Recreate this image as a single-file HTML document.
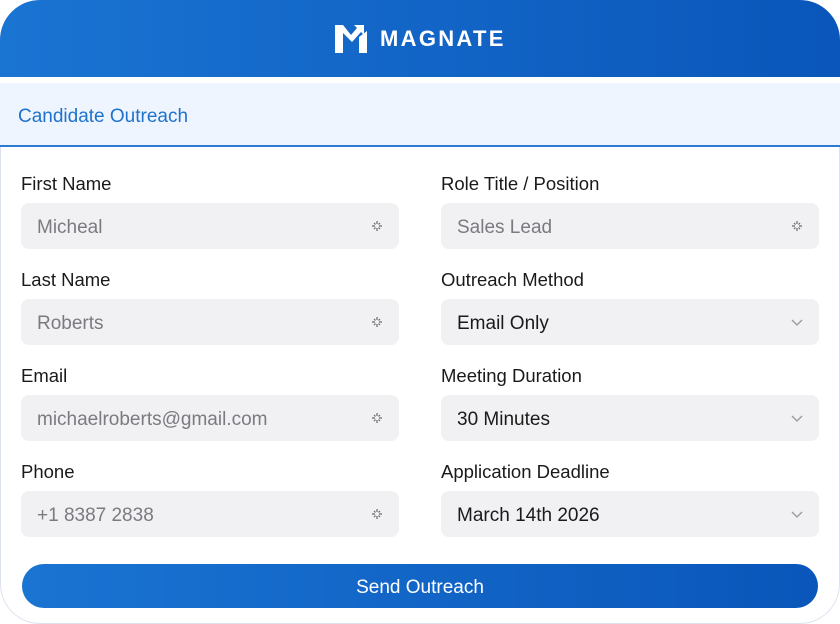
<!DOCTYPE html>
<html><head><style>
*{margin:0;padding:0;box-sizing:border-box}
body{width:840px;height:624px;background:#fff;font-family:"Liberation Sans",sans-serif;overflow:hidden}
.card{position:absolute;left:0;top:0;width:840px;height:624px;border-radius:40px;overflow:hidden;background:#fff;box-shadow:inset 0 0 0 1px #dde3ee}
.hdr{position:absolute;left:0;top:0;width:840px;height:77px;background:linear-gradient(90deg,#1a74d2,#0a56ba)}
.logo{position:absolute;left:335px;top:25px;display:flex;align-items:center}
.logo span{color:#fff;font-weight:bold;font-size:22px;letter-spacing:2.3px;margin-left:13px}
.sub{position:absolute;left:0;top:77px;width:840px;height:70px;background:#eef5ff;border-top:6px solid #fff;border-bottom:2px solid #2a7ad6}
.sub div{position:absolute;left:18px;top:23px;color:#1f72cc;font-size:19px}
.lbl{position:absolute;font-size:18.5px;color:#1a1a1a}
.inp{position:absolute;width:378px;height:46px;background:#f1f1f3;border-radius:8px;font-size:19px;color:#7a7a80;padding:14px 16px 0}
.inp.v{color:#1a1a1a}
.ic{position:absolute;right:16px;top:17px;width:12px;height:12px}
.btn{position:absolute;left:22px;top:564px;width:796px;height:44px;border-radius:22px;background:linear-gradient(90deg,#1a74d2,#0a56ba);color:#fff;font-size:19px;text-align:center;line-height:47px}
</style></head><body>
<div class="card">
<div class="hdr"><div class="logo">
<svg width="32" height="28" viewBox="0 0 32 28"><path d="M0 0h8l8 10 6-7-3-3h10v10l-3-3-9 10-9-9v20H0z" fill="#fff"/><path d="M24 12l8-6v22h-8z" fill="#fff"/></svg>
<span>MAGNATE</span></div></div>
<div class="sub"><div>Candidate Outreach</div></div>

<div class="lbl" style="left:21px;top:173px">First Name</div>
<div class="inp" style="left:21px;top:203px">Micheal<svg class="ic" viewBox="0 0 12 12"><path d="M6 1v3M6 8v3M1 6h3M8 6h3M3 3l1.5 1.5M7.5 7.5L9 9M9 3L7.5 4.5M4.5 7.5L3 9" stroke="#666" stroke-width="1.2"/></svg></div>
<div class="lbl" style="left:21px;top:269px">Last Name</div>
<div class="inp" style="left:21px;top:299px">Roberts<svg class="ic" viewBox="0 0 12 12"><path d="M6 1v3M6 8v3M1 6h3M8 6h3M3 3l1.5 1.5M7.5 7.5L9 9M9 3L7.5 4.5M4.5 7.5L3 9" stroke="#666" stroke-width="1.2"/></svg></div>
<div class="lbl" style="left:21px;top:365px">Email</div>
<div class="inp" style="left:21px;top:395px">michaelroberts@gmail.com<svg class="ic" viewBox="0 0 12 12"><path d="M6 1v3M6 8v3M1 6h3M8 6h3M3 3l1.5 1.5M7.5 7.5L9 9M9 3L7.5 4.5M4.5 7.5L3 9" stroke="#666" stroke-width="1.2"/></svg></div>
<div class="lbl" style="left:21px;top:461px">Phone</div>
<div class="inp" style="left:21px;top:491px">+1 8387 2838<svg class="ic" viewBox="0 0 12 12"><path d="M6 1v3M6 8v3M1 6h3M8 6h3M3 3l1.5 1.5M7.5 7.5L9 9M9 3L7.5 4.5M4.5 7.5L3 9" stroke="#666" stroke-width="1.2"/></svg></div>

<div class="lbl" style="left:441px;top:173px">Role Title / Position</div>
<div class="inp" style="left:441px;top:203px">Sales Lead<svg class="ic" viewBox="0 0 12 12"><path d="M6 1v3M6 8v3M1 6h3M8 6h3M3 3l1.5 1.5M7.5 7.5L9 9M9 3L7.5 4.5M4.5 7.5L3 9" stroke="#666" stroke-width="1.2"/></svg></div>
<div class="lbl" style="left:441px;top:269px">Outreach Method</div>
<div class="inp v" style="left:441px;top:299px">Email Only<svg class="ic" viewBox="0 0 12 12"><path d="M1 4l5 5 5-5" fill="none" stroke="#999" stroke-width="1.3"/></svg></div>
<div class="lbl" style="left:441px;top:365px">Meeting Duration</div>
<div class="inp v" style="left:441px;top:395px">30 Minutes<svg class="ic" viewBox="0 0 12 12"><path d="M1 4l5 5 5-5" fill="none" stroke="#999" stroke-width="1.3"/></svg></div>
<div class="lbl" style="left:441px;top:461px">Application Deadline</div>
<div class="inp v" style="left:441px;top:491px">March 14th 2026<svg class="ic" viewBox="0 0 12 12"><path d="M1 4l5 5 5-5" fill="none" stroke="#999" stroke-width="1.3"/></svg></div>

<div class="btn">Send Outreach</div>
</div>
</body></html>
